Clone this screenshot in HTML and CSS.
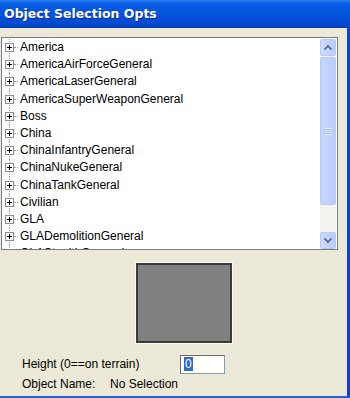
FILE: index.html
```html
<!DOCTYPE html>
<html lang="en">
<head>
    <meta charset="UTF-8">
    <title>Object Selection Opts</title>
    <link rel="stylesheet" href="styles.css">
</head>
<body>
<div class="window">
    <div class="titlebar">Object Selection Opts</div>

    <div class="panel">
        <div class="listbox">
            <ul class="tree">
                <li><span class="plus"></span>America</li>
                <li><span class="plus"></span>AmericaAirForceGeneral</li>
                <li><span class="plus"></span>AmericaLaserGeneral</li>
                <li><span class="plus"></span>AmericaSuperWeaponGeneral</li>
                <li><span class="plus"></span>Boss</li>
                <li><span class="plus"></span>China</li>
                <li><span class="plus"></span>ChinaInfantryGeneral</li>
                <li><span class="plus"></span>ChinaNukeGeneral</li>
                <li><span class="plus"></span>ChinaTankGeneral</li>
                <li><span class="plus"></span>Civilian</li>
                <li><span class="plus"></span>GLA</li>
                <li><span class="plus"></span>GLADemolitionGeneral</li>
                <li><span class="plus"></span>GLAStealthGeneral</li>
            </ul>
            <div class="scrollbar">
                <div class="sb-btn">
                    <svg width="8" height="5" viewBox="0 0 8 5"><path d="M0.5 4.5 L4 1 L7.5 4.5" fill="none" stroke="#4d6185" stroke-width="1.6"/></svg>
                </div>
                <div class="sb-thumb"><span class="grip"></span></div>
                <div class="sb-track"></div>
                <div class="sb-btn">
                    <svg width="8" height="5" viewBox="0 0 8 5"><path d="M0.5 0.5 L4 4 L7.5 0.5" fill="none" stroke="#4d6185" stroke-width="1.6"/></svg>
                </div>
            </div>
        </div>

        <div class="preview-row">
            <div class="preview"></div>
        </div>

        <div class="field">
            <span class="label">Height (0==on terrain)</span>
            <div class="input"><span class="sel">0</span></div>
        </div>
        <div class="field name">
            <span class="label short">Object Name:</span>
            <span>No Selection</span>
        </div>
    </div>
</div>
</body>
</html>
```

FILE: styles.css
```css
body {
  margin: 0;
  width: 350px;
  height: 398px;
  overflow: hidden;
  background: #ece9d8;
  font-family: Tahoma, "Liberation Sans", Arial, sans-serif;
  font-size: 12px;
  color: #000;
}

.window {
  width: 350px;
  height: 398px;
  box-sizing: border-box;
  border-right: 3px solid #0842d6;
  border-bottom: 2px solid #2a63d8;
  display: flex;
  flex-direction: column;
}

.titlebar {
  height: 28px;
  flex: none;
  margin-right: -3px;
  padding-left: 4px;
  line-height: 28px;
  color: #fff;
  font-family: "DejaVu Sans", Verdana, sans-serif;
  font-weight: bold;
  font-size: 12.5px;
  text-shadow: 1px 1px 0 #0b2c8a;
  background: linear-gradient(to bottom, #2d7ef0 0%, #0a5fe6 12%, #0553dd 50%, #0249d0 88%, #023cb8 100%);
}

.panel {
  flex: 1;
  padding: 9px 9px 0 1px;
  display: flex;
  flex-direction: column;
}

/* tree list */
.listbox {
  height: 211px;
  border: 1px solid #7b7b7b;
  background: #fff;
  display: flex;
  overflow: hidden;
}

.tree {
  flex: 1;
  list-style: none;
  margin: 0;
  padding: 1px 0 0 0;
}

.tree li {
  height: 17.2px;
  line-height: 17px;
  padding-left: 18px;
  position: relative;
  white-space: nowrap;
}

.tree li::before {
  content: "";
  position: absolute;
  left: 7px;
  top: 0;
  bottom: 0;
  border-left: 1px dotted #a0a0a0;
}

.tree li::after {
  content: "";
  position: absolute;
  left: 12px;
  top: 8px;
  width: 4px;
  border-top: 1px dotted #a0a0a0;
}

.plus {
  position: absolute;
  left: 3px;
  top: 4px;
  width: 7px;
  height: 7px;
  border: 1px solid #8c8c8c;
  background: #fff;
  z-index: 1;
}

.plus::before {
  content: "";
  position: absolute;
  left: 1px;
  top: 3px;
  width: 5px;
  height: 1px;
  background: #000;
}

.plus::after {
  content: "";
  position: absolute;
  left: 3px;
  top: 1px;
  width: 1px;
  height: 5px;
  background: #000;
}

/* scrollbar */
.scrollbar {
  width: 16px;
  margin: 1px 1px 0 0;
  display: flex;
  flex-direction: column;
  background: #f4f3ee;
}

.sb-btn {
  height: 15px;
  flex: none;
  border: 1px solid #b7c9f4;
  border-radius: 2px;
  background: linear-gradient(to right, #cddcfd, #b7cbf9);
  display: flex;
  align-items: center;
  justify-content: center;
}

.sb-thumb {
  height: 148px;
  flex: none;
  margin-top: 1px;
  box-sizing: border-box;
  border: 1px solid #b6caf5;
  border-radius: 2px;
  background: linear-gradient(to right, #c6d6fd, #b9cdfb);
  display: flex;
  align-items: center;
  justify-content: center;
}

.grip {
  width: 7px;
  height: 7px;
  background: repeating-linear-gradient(to bottom, #eef3ff 0 1px, #9fb6ef 1px 2px);
}

.sb-track {
  flex: 1;
}

/* preview */
.preview-row {
  display: flex;
  justify-content: center;
  padding: 13px 0 0 0;
}

.preview {
  width: 92px;
  height: 76px;
  margin-left: 29px;
  background: #808080;
  border: 2px solid #3c3c3c;
  box-shadow: 0 0 0 1px #fbfaf4;
}

.field {
  display: flex;
  align-items: center;
  padding-left: 21px;
  margin-top: 11px;
  height: 20px;
}

.label {
  width: 158px;
}

.input {
  width: 40px;
  height: 17px;
  border: 1px solid #7f9db9;
  border-top-color: #6c6c6c;
  border-left-color: #6c6c6c;
  background: #fff;
  line-height: 17px;
  padding-left: 3px;
}

.sel {
  background: #316ac5;
  color: #fff;
  padding: 0 1px;
}

.field.name {
  margin-top: 0;
  height: 19px;
}

.label.short {
  width: 88px;
}
```
